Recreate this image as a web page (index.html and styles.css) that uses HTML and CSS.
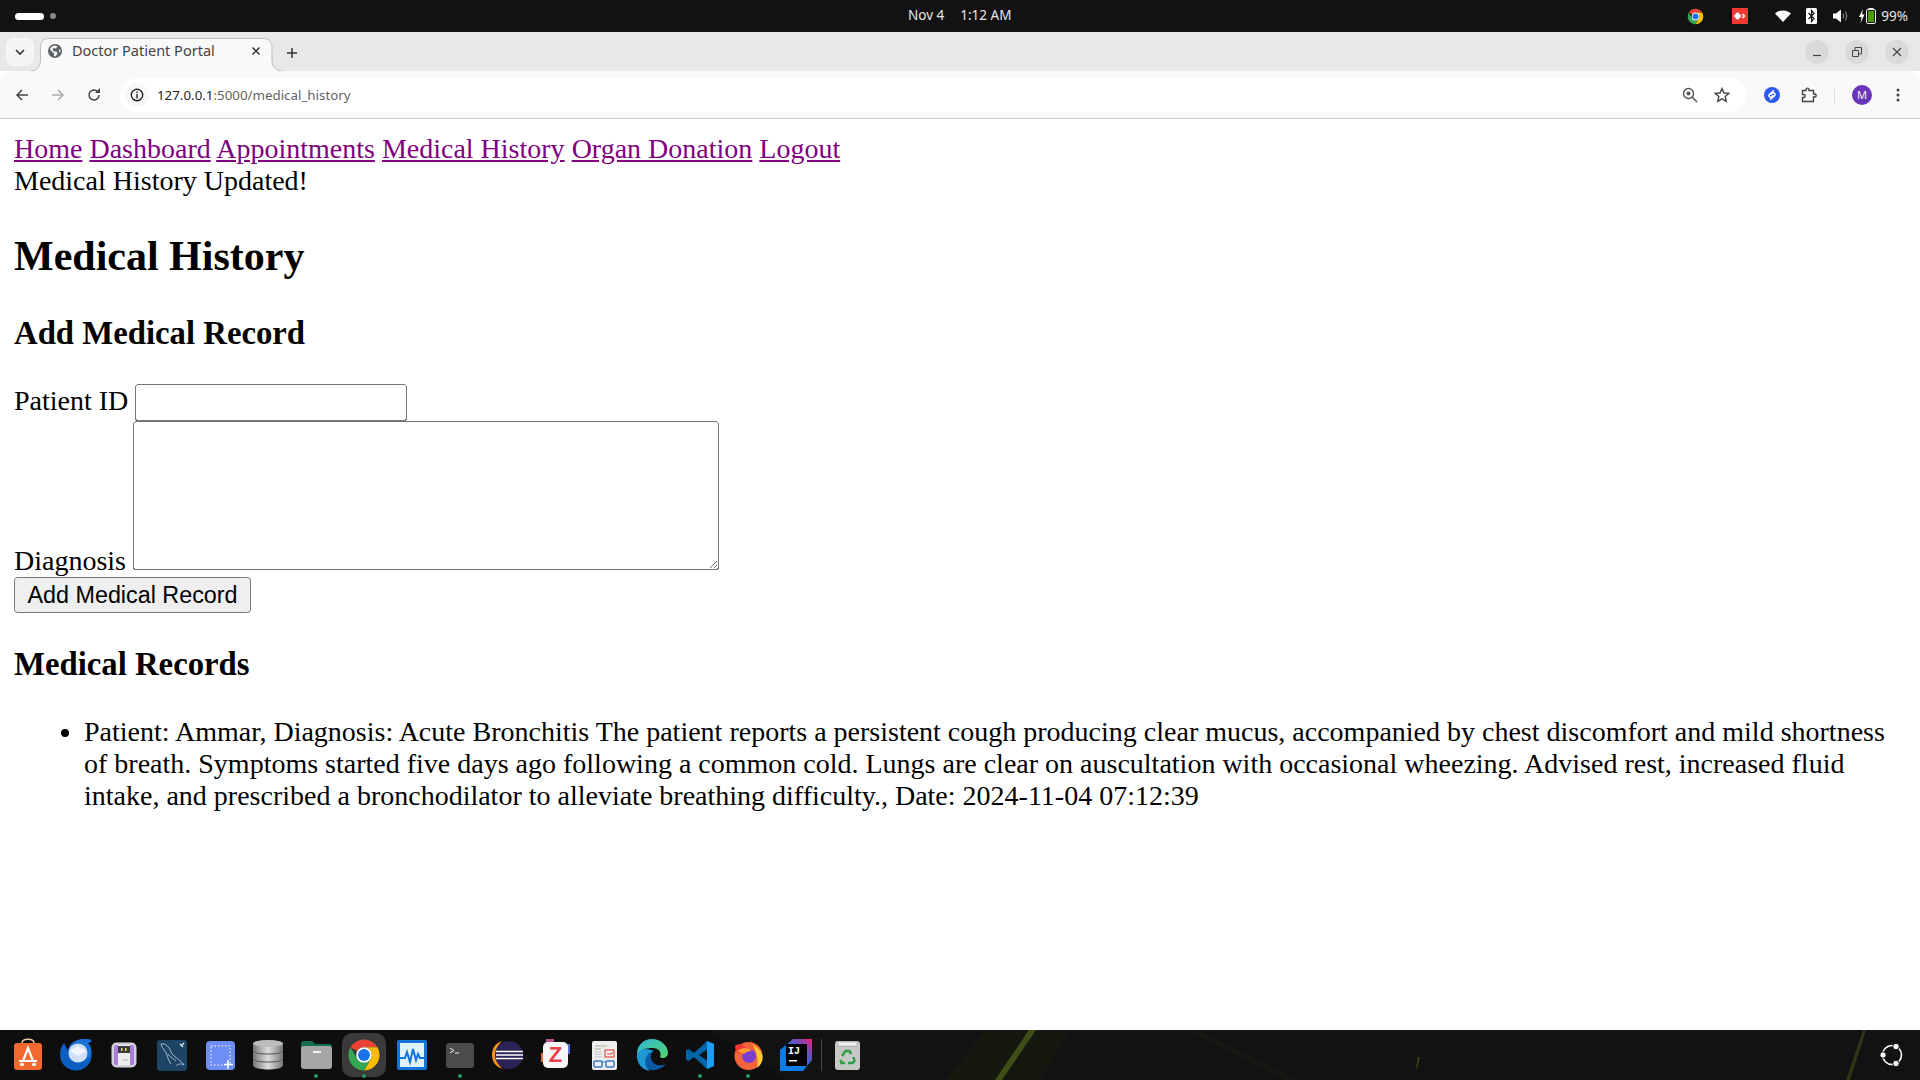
FILE: index.html
```html
<!DOCTYPE html>
<html lang="en">
<head>
<meta charset="utf-8">
<title>Doctor Patient Portal</title>
<link rel="stylesheet" href="styles.css">
</head>
<body>
<svg class="defs" width="0" height="0" aria-hidden="true">
  <symbol id="chrome" viewBox="0 0 48 48">
    <path fill="#ea4335" d="M5 13A22 22 0 0 1 43 13H24A11 11 0 0 0 14.500 18.500Z"/>
    <path fill="#fbbc04" d="M43 13A22 22 0 0 1 24 46L33.500 29.500A11 11 0 0 0 24 13Z"/>
    <path fill="#34a853" d="M24 46A22 22 0 0 1 5 13L14.500 29.500A11 11 0 0 0 33.500 29.500Z"/>
    <circle cx="24" cy="24" r="11" fill="#fff"/>
    <circle cx="24" cy="24" r="8.500" fill="#1a73e8"/>
  </symbol>
</svg>

<header class="topbar">
  <div class="workspaces"><span class="pill"></span><span class="wsdot"></span></div>
  <div class="clock"><span>Nov 4</span><span>1:12 AM</span></div>
  <div class="tray">
    <svg class="tray-chrome" width="17" height="17"><use href="#chrome"/></svg>
    <svg class="tray-any" width="16" height="16" viewBox="0 0 16 16"><rect width="16" height="16" fill="#ef3b33"/><path fill="#fff" d="M5.500 4 9.500 8 5.500 12 1.500 8ZM11 5.500 13.500 8 11 10.500 10 9.500 11.500 8 10 6.500Z"/></svg>
    <svg class="tray-wifi" width="16" height="14" viewBox="0 0 16 14"><path fill="#fff" d="M0 4.500C4.500.5 11.500.5 16 4.500L8 13Z"/></svg>
    <svg class="tray-bt" width="11" height="16" viewBox="0 0 11 16"><rect width="11" height="16" rx="1.500" fill="#fff"/><path fill="none" stroke="#111" stroke-width="1.200" d="M2.500 5 8 10.500 5.500 13.500V2.500L8 5.500 2.500 11"/></svg>
    <svg class="tray-vol" width="16" height="14" viewBox="0 0 16 14"><path fill="#fff" d="M0 4.500H3L8 .5V13.500L3 9.500H0Z"/><path fill="none" stroke="#999" d="M10 4.500Q11.500 7 10 9.500M12.500 2.500Q15 7 12.500 11.500"/></svg>
    <svg class="tray-bat" width="18" height="16" viewBox="0 0 18 16"><path fill="#fff" d="M4 1 0 9H2.500L1.500 15 5.500 6.500H3Z"/><rect x="7.500" y="1.500" width="9" height="14" rx="1.500" fill="none" stroke="#eee"/><rect x="9.500" y="0" width="5" height="1.500" fill="#eee"/><rect x="9" y="3" width="6" height="11" fill="#4e9a06"/></svg>
    <span class="pct">99%</span>
  </div>
</header>

<div class="tabstrip">
  <button class="tabmenu" aria-label="Tab list"><svg width="10" height="7" viewBox="0 0 10 7"><path fill="none" stroke="#333" stroke-width="1.600" d="M1 1 5 5 9 1"/></svg></button>
  <div class="tab">
    <svg class="tabshape" width="260" height="34" viewBox="0 0 260 34"><path fill="#f9f9f9" stroke="#bdbdbd" d="M0 33.500C9 33.500 13.500 30 13.500 22V9.500C13.500 4 16 .5 22 .5H236C242 .5 245 4 245 9.500V22C245 30 250 33.500 259 33.500"/></svg>
    <svg class="globe" width="14" height="14" viewBox="0 0 14 14"><circle cx="7" cy="7" r="7" fill="#5f6368"/><path fill="#f9f9f9" d="M7 1.500 9.500 2.500 8 4.500 5.500 4 4.500 6 6 7.500H8.500L9.500 9.500 7.500 12.500 6 12V9.500L3 6.500 2 5C3 3 5 1.500 7 1.500ZM11 5 12.500 6.500 12 9 11 7Z"/></svg>
    <span class="tabtitle">Doctor Patient Portal</span>
    <svg class="tabx" width="10" height="10" viewBox="0 0 10 10"><path stroke="#333" stroke-width="1.500" d="M1.500 1.500 8.500 8.500M8.500 1.500 1.500 8.500"/></svg>
  </div>
  <svg class="plus" width="12" height="12" viewBox="0 0 12 12"><path stroke="#333" stroke-width="1.500" d="M6 1V11M1 6H11"/></svg>
  <div class="winctl">
    <span class="winbtn"><svg width="10" height="10" viewBox="0 0 10 10"><path stroke="#444" stroke-width="1.200" d="M1 8.500H9"/></svg></span>
    <span class="winbtn"><svg width="10" height="10" viewBox="0 0 10 10"><path fill="none" stroke="#444" d="M.5 3.500H6.500V9.500H.5ZM3 3V.5H9.500V7H7"/></svg></span>
    <span class="winbtn"><svg width="10" height="10" viewBox="0 0 10 10"><path stroke="#444" stroke-width="1.200" d="M1 1 9 9M9 1 1 9"/></svg></span>
  </div>
</div>

<div class="toolbar">
  <svg class="nav nav-back" width="14" height="14" viewBox="0 0 14 14"><path fill="none" stroke="#444" stroke-width="1.500" d="M13 7H2M7 2 2 7 7 12"/></svg>
  <svg class="nav nav-fwd" width="14" height="14" viewBox="0 0 14 14"><path fill="none" stroke="#aaa" stroke-width="1.500" d="M1 7H12M7 2 12 7 7 12"/></svg>
  <svg class="nav nav-reload" width="14" height="14" viewBox="0 0 14 14"><path fill="none" stroke="#444" stroke-width="1.500" d="M12 7A5 5 0 1 1 10.500 3.400"/><path fill="#444" d="M8 5H13V0Z"/></svg>
  <div class="omnibox">
    <span class="infotile"><svg width="14" height="14" viewBox="0 0 14 14"><circle cx="7" cy="7" r="5.700" fill="none" stroke="#222" stroke-width="1.400"/><path stroke="#222" stroke-width="1.400" d="M7 6V10.500M7 3.500V5"/></svg></span>
    <span class="url"><b>127.0.0.1</b>:5000/medical_history</span>
    <span class="omni-right">
      <svg width="16" height="16" viewBox="0 0 16 16"><circle cx="6.500" cy="6.500" r="5" fill="none" stroke="#555" stroke-width="1.400"/><circle cx="6.500" cy="6.500" r="2" fill="#555"/><path stroke="#555" stroke-width="1.600" d="M10 10 15 15"/></svg>
      <svg width="16" height="16" viewBox="0 0 16 16"><path fill="none" stroke="#444" stroke-width="1.400" d="M8 1.500 10 6 14.800 6.400 11.200 9.600 12.300 14.300 8 11.800 3.700 14.300 4.800 9.600 1.200 6.400 6 6Z"/></svg>
    </span>
  </div>
  <div class="tools">
    <svg class="t-shazam" width="16" height="16" viewBox="0 0 16 16"><circle cx="8" cy="8" r="8" fill="#2d5bf0"/><path fill="none" stroke="#fff" stroke-width="1.500" stroke-linecap="round" d="M9.500 3.800 5.200 7.600A1.700 1.700 0 0 0 7.500 10L8.800 8.800M6.500 12.200 10.800 8.400A1.700 1.700 0 0 0 8.500 6L7.200 7.200"/></svg>
    <svg class="t-ext" width="16" height="16" viewBox="0 0 16 16"><path fill="none" stroke="#444" stroke-width="1.400" d="M1.500 3.500H5V2.500C5 .6 8 .6 8 2.500V3.500H12.500V7H14C15.500 7 15.500 10 14 10H12.500V14.500H1.500V10.500H3C4.500 10.500 4.500 7.500 3 7.500H1.500Z"/></svg>
    <span class="t-sep"></span>
    <span class="avatar">M</span>
    <svg class="t-menu" width="4" height="14" viewBox="0 0 4 14"><circle cx="2" cy="2" r="1.500" fill="#444"/><circle cx="2" cy="7" r="1.500" fill="#444"/><circle cx="2" cy="12" r="1.500" fill="#444"/></svg>
  </div>
</div>

<main class="page">
  <nav><a href="#">Home</a> <a href="#">Dashboard</a> <a href="#">Appointments</a> <a href="#">Medical History</a> <a href="#">Organ Donation</a> <a href="#">Logout</a></nav>
  <div>Medical History Updated!</div>
  <h2>Medical History</h2>
  <h3>Add Medical Record</h3>
  <form>
    <label>Patient ID</label> <input class="pid" type="text"><br>
    <label>Diagnosis</label> <textarea class="diag"></textarea><br>
    <button class="submit" type="button">Add Medical Record</button>
  </form>
  <h3>Medical Records</h3>
  <ul>
    <li>Patient: Ammar, Diagnosis: Acute Bronchitis The patient reports a persistent cough producing clear mucus, accompanied by chest discomfort and mild shortness of breath. Symptoms started five days ago following a common cold. Lungs are clear on auscultation with occasional wheezing. Advised rest, increased fluid intake, and prescribed a bronchodilator to alleviate breathing difficulty., Date: 2024-11-04 07:12:39</li>
  </ul>
</main>

<footer class="dock">
  <svg class="wallpaper" width="1920" height="50" viewBox="0 0 1920 50" aria-hidden="true">
    <path fill="#121212" d="M707 0H1920V50H787Z"/>
    <path fill="#15180f" d="M985 0H1070L1040 50H945Z"/>
    <path fill="#3d4f16" d="M1029 0H1036L1002 50H995Z"/>
    <path fill="#151712" d="M1186 0H1196L1296 50H1284Z"/>
    <path fill="#3a4a16" d="M1418 27 1420 27 1417 38 1416 38Z"/>
    <path fill="#2d3614" d="M1863 0H1866L1850 50H1846Z"/>
  </svg>
  <div class="dockitem"><svg width="30" height="34" viewBox="0 0 30 34"><path fill="none" stroke="#f0c8a0" stroke-width="1.500" d="M9 7V5C9 0 21 0 21 5V7"/><rect x="1" y="5" width="28" height="27" rx="3" fill="#f0692f"/><path fill="none" stroke="#fff" stroke-width="2.200" d="M10 23 15 10 20 23M6 23H24"/><path stroke="#fff" stroke-width="2.600" d="M7 26.500H11M19 26.500H23"/></svg></div>
  <div class="dockitem"><svg width="33" height="32" viewBox="0 0 33 32"><path fill="#0b5fc0" d="M4 4C-1 10-1 19 3 25 8 32 19 34 26 28 31 24 33 17 31 11L22 10 9 14Z"/><path fill="#1b73d9" d="M8 15C7 7 13 1 22 0 28-1 33 1 31 3L28 4C32 8 32 14 30 17 28 22 20 24 14 23 10 21 8 19 8 15Z"/><circle cx="18" cy="14" r="9.500" fill="#cfe0f7"/><path fill="#f2f6fc" d="M10 12 18 7 26 12 18 17Z"/></svg></div>
  <div class="dockitem"><svg width="26" height="26" viewBox="0 0 26 26"><rect x=".5" y=".5" width="25" height="25" rx="5" fill="#d5d0dc"/><rect x="3" y="3" width="20" height="20" rx="2" fill="#a77fd6"/><rect x="7" y="3" width="12" height="20" fill="#eee"/><rect x="7" y="4" width="12" height="7" fill="#3c3c3c"/><rect x="10" y="6" width="1.500" height="3" fill="#f3d95c"/><rect x="14" y="6" width="1.500" height="3" fill="#f3d95c"/><path stroke="#aaa" d="M12 18H17"/></svg></div>
  <div class="dockitem"><svg width="30" height="31" viewBox="0 0 30 31"><rect width="30" height="31" rx="3" fill="#1d4464"/><path fill="none" stroke="#a9bccb" d="M4 4C9 3 12 7 14 12 16 17 23 19 27 25 24 23 21 24 19 26M4 4C5 9 9 11 10 15 11 19 12 21 14 24M11 14C14 18 17 19 19 21"/><path stroke="#d5dde3" stroke-width="1.500" d="M23 4 26 7M27 3 24 6"/></svg></div>
  <div class="dockitem"><svg width="29" height="29" viewBox="0 0 29 29"><rect width="29" height="29" rx="4" fill="#6f8ef5"/><rect x="5" y="5" width="19" height="19" fill="none" stroke="#fff" stroke-dasharray="1.500 2"/><path stroke="#fff" stroke-width="1.500" d="M22 19V28M18 23.500H27"/></svg></div>
  <div class="dockitem"><svg width="30" height="30" viewBox="0 0 30 30"><defs><linearGradient id="dbg" x1="0" x2="1" y1="0" y2="0"><stop offset="0" stop-color="#777"/><stop offset=".5" stop-color="#ddd"/><stop offset="1" stop-color="#777"/></linearGradient></defs><path fill="url(#dbg)" d="M0 4C0 -1 30 -1 30 4V25C30 31 0 31 0 25Z"/><ellipse cx="15" cy="3.500" rx="15" ry="3.500" fill="#bbb"/><path fill="none" stroke="#555" d="M0 11C0 15 30 15 30 11M0 19C0 23 30 23 30 19"/></svg></div>
  <div class="dockitem has-dot"><svg width="31" height="28" viewBox="0 0 31 28"><path fill="#13704f" d="M0 3C0 1 1 0 3 0H11L14 3H28C30 3 31 4 31 6V12H0Z"/><rect y="5" width="31" height="23" rx="3" fill="#a6a6a6"/><rect x="12" y="10" width="8" height="2" fill="#f2f2f2"/></svg></div>
  <div class="dockitem has-dot active"><svg width="34" height="34"><use href="#chrome"/></svg></div>
  <div class="dockitem"><svg width="30" height="30" viewBox="0 0 30 30"><rect width="30" height="30" rx="2" fill="#1273d9"/><rect x="3" y="3" width="24" height="24" fill="#dff1fb"/><path fill="none" stroke="#1273d9" stroke-width="2" d="M3 18H8L10 12 13 22 16 9 19 20 21 14 23 18H27"/></svg></div>
  <div class="dockitem has-dot"><svg width="28" height="25" viewBox="0 0 28 25"><rect width="28" height="25" rx="3" fill="#4b4b4b"/><path fill="none" stroke="#eee" d="M4 5 8 7.500 4 10"/><path stroke="#eee" d="M9 10H13"/></svg></div>
  <div class="dockitem"><svg width="32" height="30" viewBox="0 0 32 30"><path fill="#f7941e" d="M10 1C3 3 0 9 0 15 0 22 4 27 11 29 6 25 4 20 4 15 4 9 6 5 10 1Z"/><circle cx="17" cy="15" r="14" fill="#2c2255"/><path stroke="#fff" stroke-width="1.500" d="M4 11.500H31M4 15H31M4 18.500H31"/></svg></div>
  <div class="dockitem"><svg width="30" height="32" viewBox="0 0 30 32"><rect x="5" y="0" width="8" height="6" fill="#b8528e"/><rect x="0" y="14" width="4" height="9" fill="#e26a3c"/><rect x="25" y="5" width="4" height="10" fill="#5773d6"/><rect x="2" y="3" width="25" height="26" rx="5" fill="#f6f6f6"/><text class="zlet" x="14.500" y="23">Z</text></svg></div>
  <div class="dockitem"><svg width="25" height="29" viewBox="0 0 25 29"><rect width="25" height="29" rx="2" fill="#ededed"/><path stroke="#b9ad95" d="M3 5H15M3 8H9"/><path stroke="#c8c8c8" d="M3 11H10M3 13.500H10M3 16H10"/><rect x="13" y="9" width="9" height="7" fill="none" stroke="#df5147" stroke-width="1.200"/><path fill="none" stroke="#df5147" d="M15 13H20V11"/><rect x="2" y="20" width="8" height="6" rx="1" fill="none" stroke="#3a7cc4" stroke-width="1.500"/><rect x="14" y="20" width="8" height="6" rx="1" fill="none" stroke="#3a7cc4" stroke-width="1.500"/><path stroke="#3a7cc4" d="M10 21H14"/></svg></div>
  <div class="dockitem"><svg width="32" height="32" viewBox="0 0 32 32"><defs><linearGradient id="edge" x1="0" y1="0" x2="1" y2="1"><stop offset="0" stop-color="#2fb5d9"/><stop offset="1" stop-color="#56d46a"/></linearGradient></defs><path fill="#0c59a4" d="M1 15C2 27 13 34 23 30 26 29 28 27 30 25 24 28 16 26 15 19 14 16 16 13 18 12 10 9 2 10 1 15Z"/><path fill="url(#edge)" d="M1 15C1 6 8 0 16 0 25 0 32 7 32 14 32 19 26 20 24 18 26 14 23 9 17 9 9 9 4 11 1 15Z"/><path fill="#1d9ad6" d="M1 15C0 24 6 31 14 32 10 29 8 24 10 19 12 14 15 12 18 12 10 9 3 10 1 15Z"/></svg></div>
  <div class="dockitem has-dot"><svg width="28" height="28" viewBox="0 0 28 28"><path fill="#0065a9" d="M28 3V25L21 28 8 16 2.500 20 0 18.500V9.500L2.500 8 8 12 21 0Z"/><path fill="#1f9cf0" d="M21 0 28 3V25L21 28Z"/><path fill="#111" d="M21 8.500 13 14 21 19.500Z"/></svg></div>
  <div class="dockitem has-dot"><svg width="29" height="30" viewBox="0 0 29 30"><circle cx="14.500" cy="16" r="14" fill="#f2643a"/><path fill="#ffcb32" d="M17 0C17 5 28 9 28.500 16 29 21 27 25 23 28 25 18 22 11 17 0Z"/><path fill="#f0333c" d="M1 6C4 3 9 4 12 8 7 8 5 11 5 14 3 12 1 10 1 6Z"/><circle cx="15" cy="16" r="7" fill="#7b3fd0"/><path fill="#ff9a2e" d="M3 11C8 7 15 8 18 11 14 11 12 12 10 14Z"/></svg></div>
  <div class="dockitem"><svg width="32" height="32" viewBox="0 0 32 32"><defs><linearGradient id="ij" x1="0" y1="1" x2="1" y2="0"><stop offset=".45" stop-color="#0c7ce8"/><stop offset=".8" stop-color="#8c3fb0"/><stop offset="1" stop-color="#f0246e"/></linearGradient></defs><path fill="url(#ij)" d="M0 11 13 0H32V21L23 32H0Z"/><rect x="6" y="5" width="21" height="22" fill="#000"/><text class="ijlet" x="14" y="15">IJ</text><rect x="9" y="21" width="8" height="1.500" fill="#fff"/></svg></div>
  <span class="docksep"></span>
  <div class="dockitem trash"><svg width="25" height="29" viewBox="0 0 25 29"><rect width="25" height="29" rx="3" fill="#c6c8c4"/><rect x="3" y="1" width="19" height="4" fill="#f0f0f0" stroke="#999" stroke-width=".5"/><path fill="none" stroke="#2e9e4a" stroke-width="2.500" d="M7 15 10.500 10H14.500L16 13M18.500 16 19.500 20 17.500 22H13M10 22H6.500L5.500 19"/></svg></div>
  <svg class="ubuntu" width="24" height="24" viewBox="0 0 24 24"><circle cx="12" cy="12" r="9.500" fill="none" stroke="#fff" stroke-width="1.600"/><circle cx="16" cy="3.500" r="3.200" fill="#fff" stroke="#111"/><circle cx="16" cy="20.500" r="3.200" fill="#fff" stroke="#111"/><circle cx="3" cy="12" r="3.200" fill="#fff" stroke="#111"/></svg>
</footer>
</body>
</html>
```

FILE: styles.css
```css
* { box-sizing: border-box; }
html, body { margin: 0; height: 100%; }
body {
  display: flex;
  flex-direction: column;
  height: 1080px;
  overflow: hidden;
  background: #fff;
  font-family: "Liberation Serif", serif;
}
.defs { position: absolute; }

/* system top bar */
.topbar {
  flex: 0 0 32px;
  background: #121212;
  display: flex;
  align-items: center;
  position: relative;
  color: #e6e6e6;
  font: 14px "Noto Sans", sans-serif;
}
.workspaces { display: flex; align-items: center; gap: 6px; padding-left: 15px; }
.pill { width: 29px; height: 7px; border-radius: 4px; background: #fff; }
.wsdot { width: 6px; height: 6px; border-radius: 50%; background: #8a8a8a; }
.clock { position: absolute; left: 908px; top: 6px; display: flex; gap: 16px; font-size: 13.500px; }
.tray { margin-left: auto; display: flex; align-items: center; padding-right: 12px; }
.tray-any { margin-left: 28px; }
.tray-wifi { margin-left: 27px; }
.tray-bt { margin-left: 15px; }
.tray-vol { margin-left: 16px; }
.tray-bat { margin-left: 10px; }
.pct { margin-left: 4px; font-size: 13.500px; }

/* tab strip */
.tabstrip {
  flex: 0 0 39px;
  background: #e8e8e8;
  display: flex;
  align-items: flex-start;
  padding: 6px 11px 0 6px;
}
.tabmenu {
  width: 28px; height: 28px; padding: 0; border: 0; border-radius: 8px;
  background: #f5f5f5;
  display: flex; align-items: center; justify-content: center;
}
.tab {
  position: relative;
  margin-left: 6px;
  width: 232px;
  height: 33px;
  display: flex;
  align-items: center;
  padding: 0 0 7px 8px;
  color: #444;
  font: 14.500px "Noto Sans", sans-serif;
}
.tabshape { position: absolute; left: -13px; top: 0; }
.globe, .tabtitle, .tabx { position: relative; }
.tabtitle { margin-left: 10px; top: -1px; }
.tabx { margin-left: auto; margin-right: 11px; }
.plus { margin: 9px 0 0 14px; }
.winctl { margin-left: auto; display: flex; gap: 16px; padding-top: 2px; }
.winbtn {
  width: 24px; height: 24px; border-radius: 50%;
  background: #dadada;
  display: flex; align-items: center; justify-content: center;
}

/* toolbar */
.toolbar {
  flex: 0 0 48px;
  background: #f9f9f9;
  border-bottom: 1px solid #c9c9c9;
  border-radius: 10px 10px 0 0;
  position: relative;
  display: flex;
  align-items: center;
  padding: 0 15px;
}
.nav-fwd { margin-left: 22px; }
.nav-reload { margin-left: 22px; }
.omnibox {
  margin-left: 19px;
  width: 1626px;
  height: 34px;
  border-radius: 17px;
  background: #fff;
  display: flex;
  align-items: center;
  padding: 0 16px 0 5px;
}
.infotile {
  width: 24px; height: 24px; border-radius: 50%; background: #f7f7f7;
  display: flex; align-items: center; justify-content: center;
}
.url { margin-left: 8px; font: 13.330px "Noto Sans", sans-serif; color: #5f6368; }
.url b { font-weight: 400; color: #1f1f1f; }
.omni-right { margin-left: auto; display: flex; gap: 16px; align-items: center; }
.tools { flex: 1; display: flex; align-items: center; padding-left: 18px; }
.t-ext { margin-left: 21px; }
.t-sep { width: 1px; height: 16px; background: #ddd; margin-left: 17px; }
.avatar {
  margin-left: 17px;
  width: 20px; height: 20px; border-radius: 50%;
  background: #6a35b8; color: #eee;
  font: 11px/20px "Noto Sans", sans-serif; text-align: center;
}
.t-menu { margin-left: 24px; }

/* page content, shown at 175% browser zoom */
.page {
  flex: 1;
  zoom: 1.750;
  padding: 8px;
  overflow: hidden;
  font-size: 16px;
  color: #000;
  min-height: 0;
}
.page a { color: #800080; }
.pid { width: 155.400px; height: 21px; vertical-align: baseline; }
.diag { width: 334.600px; height: 85px; }
.submit { font: 13.333px "Liberation Sans", sans-serif; }

/* dock */
.dock {
  flex: 0 0 50px;
  background: #0e0e0e;
  position: relative;
  display: flex;
  align-items: center;
  padding-left: 4px;
}
.wallpaper { position: absolute; left: 0; top: 0; }
.dockitem {
  position: relative;
  width: 48px; height: 44px;
  flex: none;
  display: flex; align-items: center; justify-content: center;
}
.dockitem svg { position: relative; }
.active::before {
  content: "";
  position: absolute; left: 2px; top: 0;
  width: 44px; height: 44px; border-radius: 10px;
  background: #3a3a3a;
}
.has-dot::after {
  content: "";
  position: absolute; left: 22px; bottom: -1px;
  width: 4px; height: 4px; border-radius: 50%;
  background: #1d9a62;
}
.docksep { position: relative; width: 1px; height: 32px; background: #444; margin: 0 0 0 1px; }
.trash { margin-left: 1px; }
.zlet { font: 700 22px "Liberation Sans", sans-serif; fill: #e8404c; text-anchor: middle; }
.ijlet { font: 700 10px "Liberation Mono", monospace; fill: #fff; text-anchor: middle; }
.ubuntu { position: absolute; left: 1880px; top: 13px; }
```
